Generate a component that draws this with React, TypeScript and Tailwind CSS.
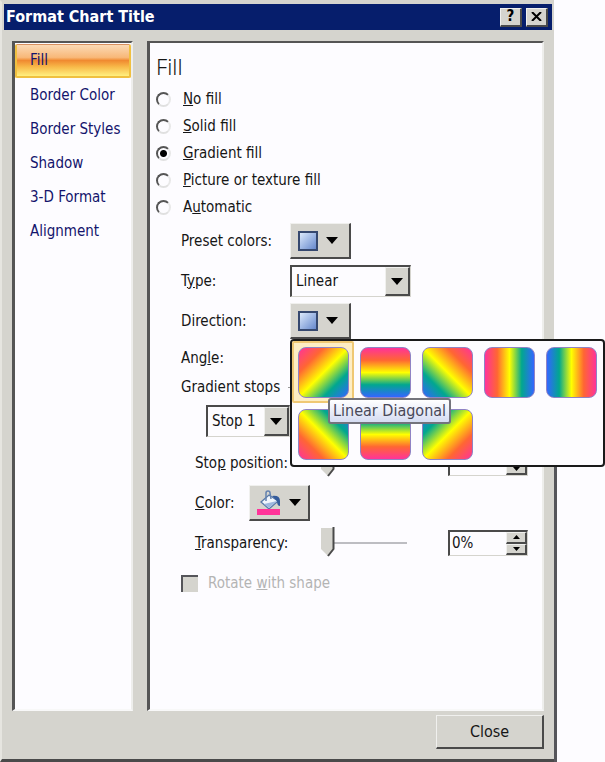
import type { ReactNode } from "react";

const panel =
  "bg-[#fdfcff] border-t-2 border-l-[3px] border-r-2 border-b-2 border-t-[#555555] border-l-[#555555] border-r-[#eeeeec] border-b-[#f8f8f8]";
const raised =
  "bg-[#d5d4ce] border-t border-l border-r-2 border-b-2 border-t-[#f0f0ee] border-l-[#f0f0ee] border-r-[#4a4a4a] border-b-[#4a4a4a]";
const sunken =
  "bg-[#fdfcff] border-t-2 border-l-2 border-r border-b border-t-[#4a4a4a] border-l-[#4a4a4a] border-r-[#d5d4ce] border-b-[#d5d4ce]";

const sections = ["Fill", "Border Color", "Border Styles", "Shadow", "3-D Format", "Alignment"];

const fills = [
  { id: "none", label: <><u>N</u>o fill</> },
  { id: "solid", label: <><u>S</u>olid fill</> },
  { id: "gradient", label: <><u>G</u>radient fill</> },
  { id: "picture", label: <><u>P</u>icture or texture fill</> },
  { id: "automatic", label: <>A<u>u</u>tomatic</> },
];

const swatches = [
  "bg-[linear-gradient(135deg,#ff3399_0%,#ff6633_25%,#ffff00_50%,#01a78f_75%,#3366ff_100%)]",
  "bg-[linear-gradient(180deg,#ff3399_0%,#ff6633_25%,#ffff00_50%,#01a78f_75%,#3366ff_100%)]",
  "bg-[linear-gradient(225deg,#ff3399_0%,#ff6633_25%,#ffff00_50%,#01a78f_75%,#3366ff_100%)]",
  "bg-[linear-gradient(90deg,#ff3399_0%,#ff6633_25%,#ffff00_50%,#01a78f_75%,#3366ff_100%)]",
  "bg-[linear-gradient(270deg,#ff3399_0%,#ff6633_25%,#ffff00_50%,#01a78f_75%,#3366ff_100%)]",
  "bg-[linear-gradient(45deg,#ff3399_0%,#ff6633_25%,#ffff00_50%,#01a78f_75%,#3366ff_100%)]",
  "bg-[linear-gradient(0deg,#ff3399_0%,#ff6633_25%,#ffff00_50%,#01a78f_75%,#3366ff_100%)]",
  "bg-[linear-gradient(315deg,#ff3399_0%,#ff6633_25%,#ffff00_50%,#01a78f_75%,#3366ff_100%)]",
];

const Arrow = () => (
  <svg width="12" height="7" viewBox="0 0 12 7" className="shrink-0">
    <path d="M0 0h12L6 7z" fill="#000" />
  </svg>
);

const PickerButton = ({ label, children }: { label: string; children: ReactNode }) => (
  <button aria-label={label} className={`${raised} flex h-9 w-[61px] items-center gap-2 pl-[7px]`}>
    {children}
    <Arrow />
  </button>
);

const ColorSquare = () => (
  <span className="size-5 border-2 border-[#35486f] bg-linear-to-br from-[#dce9fb] to-[#6688cc]" />
);

const Bucket = () => (
  <svg width="24" height="26" viewBox="0 0 24 26" className="shrink-0">
    <path d="M4 12L12 5l9 6-9 8z" fill="#f0f5fc" stroke="#5878a8" strokeWidth="1.3" />
    <path d="M7 14l13-3-8 7z" fill="#9db8df" />
    <path d="M9 11V3q0-2 2-2t2 2l1 6" fill="none" stroke="#6482b0" strokeWidth="1.5" />
    <path d="M15 6q8-1 8 5v5q-3 0-3-5z" fill="#355c9c" />
    <rect x="0" y="19" width="23" height="6" fill="#ff3399" />
  </svg>
);

const Combo = ({ id, value, width }: { id: string; value: string; width: string }) => (
  <span className={`${sunken} ${width} relative flex h-8`}>
    <select id={id} aria-label={id} className="w-full appearance-none bg-transparent pl-1 outline-none">
      <option>{value}</option>
    </select>
    <span className={`${raised} pointer-events-none absolute inset-y-0 right-0 flex w-[25px] items-center justify-center`}>
      <Arrow />
    </span>
  </span>
);

const Spinner = ({ id, value }: { id: string; value: string }) => (
  <span className={`${sunken} ml-auto mr-3.5 flex h-[26px] w-20`}>
    <input id={id} defaultValue={value} className="w-full min-w-0 bg-transparent pl-0.5 outline-none" />
    <span className="flex w-[21px] shrink-0 flex-col">
      <button aria-label="Increase" className={`${raised} flex flex-1 items-center justify-center`}>
        <svg width="7" height="4" viewBox="0 0 7 4"><path d="M0 4h7L3.5 0z" /></svg>
      </button>
      <button aria-label="Decrease" className={`${raised} flex flex-1 items-center justify-center`}>
        <svg width="7" height="4" viewBox="0 0 7 4"><path d="M0 0h7L3.5 4z" /></svg>
      </button>
    </span>
  </span>
);

const Slider = ({ label }: { label: string }) => (
  <span className="relative flex h-8 w-[86px] items-center">
    <input type="range" aria-label={label} defaultValue={0} className="absolute inset-0 opacity-0" />
    <span className="h-0.5 w-full bg-[#bdbdc2]" />
    <svg width="14" height="30" viewBox="0 0 14 30" className="pointer-events-none absolute left-0 top-0">
      <path d="M0 1h13v21l-6 7-7-7z" fill="#d5d4ce" />
      <path d="M12.5 0v22L7 29" fill="none" stroke="#4a4a4a" strokeWidth="2" />
    </svg>
  </span>
);

const DirectionMenu = () => (
  <div className="absolute left-0 top-9 z-10 w-[315px] rounded-sm border-2 border-[#1a1a1a] bg-[#fdfcff]">
    <div className="grid grid-cols-5">
      {swatches.map((fill, i) => (
        <button
          key={fill}
          aria-label={`Direction ${i + 1}`}
          className={`flex h-[62px] items-center justify-center rounded-xs border-2 ${i === 0 ? "border-[#efc874] bg-[#fdedc4]" : "border-transparent"}`}
        >
          <span className={`size-[51px] rounded-lg border border-[#8f83c4] ${fill}`} />
        </button>
      ))}
    </div>
    <div role="tooltip" className="absolute left-9 top-[57px] rounded-[3px] border-2 border-[#73737c] bg-linear-to-b from-white to-[#d5dcf2] px-[3px] text-base leading-[22px] whitespace-nowrap text-[#484858]">
      Linear Diagonal
    </div>
  </div>
);

const Row = ({ children }: { children: ReactNode }) => <div className="flex h-10 items-center">{children}</div>;

const App = () => {
  return (
    <div className="min-h-screen bg-[#fdfcff] pr-12 font-['DejaVu_Sans_Condensed','DejaVu_Sans',sans-serif] text-[15px] text-[#161616]">
      {/* the right edge turns dark below the open menu */}
      <div className="bg-[linear-gradient(#fdfcff_340px,#55555a_340px)] pr-[3px]">
        <main className="flex min-h-screen flex-col border-t-2 border-b-[3px] border-l-2 border-t-[#d5d4ce] border-b-[#4a4a4a] border-l-[#e6e5e0] bg-[#d5d4ce]">
          <header className="mx-0.5 mt-0.5 flex h-[26px] items-center gap-1 bg-[#061e6c] pr-1 pl-0.5 text-white">
            <h1 className="grow text-base font-bold">Format Chart Title</h1>
            <button aria-label="Help" className={`${raised} flex h-[19px] w-[22px] items-center justify-center font-bold text-black`}>?</button>
            <button aria-label="Close window" className={`${raised} flex h-[19px] w-[22px] items-center justify-center`}>
              <svg width="11" height="9" viewBox="0 0 11 9"><path d="M1 0l9 9M10 0L1 9" stroke="#000" strokeWidth="2" /></svg>
            </button>
          </header>

          <div className="mt-[11px] flex grow gap-3.5 pr-2.5 pl-2.5">
            <nav className={`${panel} flex w-[121px] shrink-0 flex-col pt-px text-[#14146c]`}>
              {sections.map((name, i) => (
                <a
                  key={name}
                  href="#"
                  className={`flex h-[34px] shrink-0 items-center whitespace-nowrap ${i === 0 ? "rounded-xs border-2 border-t border-[#f0c040] border-t-[#d89060] bg-[linear-gradient(#fbd9b5_0%,#f8b878_40%,#f08a30_50%,#f8b848_70%,#fff080_100%)] pl-[13px]" : "pl-[15px]"}`}
                >
                  {name}
                </a>
              ))}
            </nav>

            <section className={`${panel} min-w-0 grow pl-1.5`}>
              <h2 className="mt-[7px] mb-1 h-8 font-['Noto_Sans',sans-serif] text-[22px] leading-8 font-light">Fill</h2>
              {fills.map(({ id, label }) => (
                <label key={id} className="flex h-[27px] items-center gap-3">
                  <input
                    type="radio"
                    name="fill"
                    defaultChecked={id === "gradient"}
                    className="size-[15px] appearance-none rounded-full border-2 border-t-[#555] border-r-[#e8e8e8] border-b-[#e0e0e0] border-l-[#555] checked:bg-[radial-gradient(circle,#000_3px,transparent_4px)]"
                  />
                  <span>{label}</span>
                </label>
              ))}

              <div className="pl-[25px]">
                <Row>
                  <span className="w-[109px]">Preset colors:</span>
                  <PickerButton label="Preset colors"><ColorSquare /></PickerButton>
                </Row>
                <Row>
                  <label htmlFor="type" className="w-[109px]">T<u>y</u>pe:</label>
                  <Combo id="type" value="Linear" width="w-[121px]" />
                </Row>
                <Row>
                  <span className="w-[109px]">Direction:</span>
                  <div className="relative">
                    <PickerButton label="Direction"><ColorSquare /></PickerButton>
                    <DirectionMenu />
                  </div>
                </Row>
                <div className="flex h-[34px] items-center">
                  <label htmlFor="angle">Ang<u>l</u>e:</label>
                  <Spinner id="angle" value="" />
                </div>
                <div className="flex h-6 items-center gap-2">
                  Gradient stops
                  <span className="mr-3.5 h-px grow bg-[#999]" />
                </div>
                <div className="flex h-11 items-center pl-[25px]">
                  <Combo id="stop" value="Stop 1" width="w-[84px]" />
                </div>
                <div className="pl-3.5">
                  <Row>
                    <label htmlFor="position" className="w-[126px]">Sto<u>p</u> position:</label>
                    <Slider label="Stop position slider" />
                    <Spinner id="position" value="" />
                  </Row>
                  <Row>
                    <span className="w-[54px]"><u>C</u>olor:</span>
                    <PickerButton label="Color"><Bucket /></PickerButton>
                  </Row>
                  <Row>
                    <label htmlFor="transparency" className="w-[126px]"><u>T</u>ransparency:</label>
                    <Slider label="Transparency slider" />
                    <Spinner id="transparency" value="0%" />
                  </Row>
                </div>
                <label className="flex h-10 items-center gap-2.5 text-[#b4b4b4]">
                  <input type="checkbox" disabled className="size-[17px] appearance-none border-t-2 border-l-2 border-[#55555a] bg-[#d5d4ce]" />
                  <span>Rotate <u>w</u>ith shape</span>
                </label>
              </div>
            </section>
          </div>

          <footer className="flex h-12 shrink-0 justify-end pt-1 pr-2.5">
            <button className={`${raised} h-[34px] w-[108px] text-base`}>Close</button>
          </footer>
        </main>
      </div>
    </div>
  );
};

export default App;
